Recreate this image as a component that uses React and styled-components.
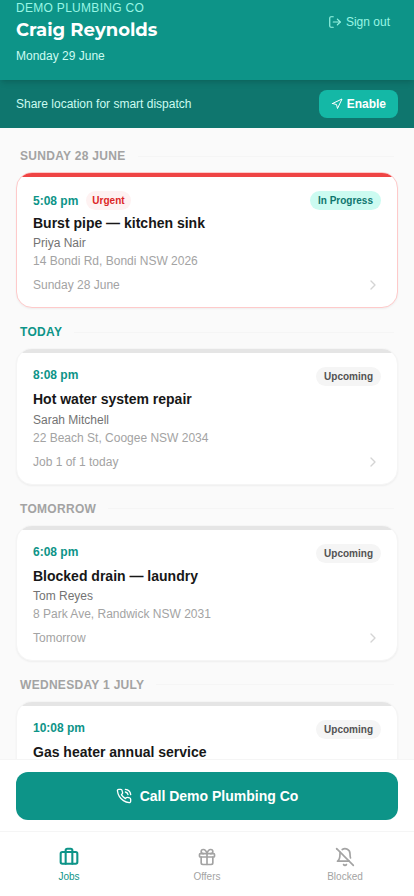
import React from "react";
import styled, { createGlobalStyle } from "styled-components";
import {
  LuLogOut, LuNavigation, LuPhoneCall, LuBriefcase, LuGift, LuBellOff, LuChevronRight,
} from "react-icons/lu";

const Global = createGlobalStyle`
  * { box-sizing: border-box; }
  body {
    margin: 0;
    background: #fafafa;
    color: #171717;
    font: 400 12px/16px "Liberation Sans", Arial, sans-serif;
  }
  button { font: inherit; border: 0; cursor: pointer; }
  h1, h2, h3, p { margin: 0; }
  svg { display: block; flex: none; }
`;

const Screen = styled.div`
  display: flex;
  flex-direction: column;
  height: 100vh;
  overflow: hidden;
`;

const Header = styled.header`
  display: flex;
  justify-content: space-between;
  align-items: flex-start;
  flex: none;
  height: 80px;
  padding: 0 16px;
  background: #0d9488;
  box-shadow: 0 4px 6px -1px rgba(0, 0, 0, 0.1), 0 2px 4px -2px rgba(0, 0, 0, 0.1);
  z-index: 1;
`;

const Company = styled.p`
  color: #99f6e4;
  letter-spacing: 0.3px;
  text-transform: uppercase;
`;

const TechName = styled.h1`
  color: #fff;
  font-family: "Montserrat", sans-serif;
  font-size: 18px;
  font-weight: 700;
  line-height: 28px;
`;

const Today = styled.p`
  margin-top: 4px;
  color: #ccfbf1;
`;

const SignOut = styled.button`
  display: flex;
  align-items: center;
  gap: 4px;
  margin-top: 8px;
  padding: 6px 8px;
  background: none;
  color: #99f6e4;
`;

const LocationBar = styled.div`
  display: flex;
  justify-content: space-between;
  align-items: center;
  flex: none;
  height: 48px;
  padding: 0 16px;
  background: #0f766e;
  color: #ccfbf1;
`;

const EnableButton = styled.button`
  display: flex;
  align-items: center;
  gap: 4px;
  height: 28px;
  padding: 0 12px;
  border-radius: 8px;
  background: #14b8a6;
  color: #fff;
  && { font-weight: 700; }
`;

const JobList = styled.main`
  display: flex;
  flex-direction: column;
  flex: 1;
  gap: 16px;
  min-height: 0;
  padding: 20px 16px 0;
  overflow: hidden;
`;

const DayHeading = styled.h2`
  display: flex;
  align-items: center;
  gap: 12px;
  margin-bottom: 8px;
  padding: 0 4px;
  color: ${(p) => (p.$current ? "#0d9488" : "#a3a3a3")};
  font-size: 12px;
  font-weight: 700;
  letter-spacing: 0.3px;
  text-transform: uppercase;

  &::after {
    content: "";
    flex: 1;
    height: 1px;
    background: #f5f5f5;
  }
`;

const Card = styled.article`
  border: 1px solid ${(p) => (p.$urgent ? "#fecaca" : "#f5f5f5")};
  border-radius: 16px;
  background: #fff;
  box-shadow: 0 1px 2px rgba(0, 0, 0, 0.05);
  overflow: hidden;
`;

const Strip = styled.div`
  height: 4px;
  background: ${(p) => (p.$urgent ? "#ef4444" : "#e5e5e5")};
`;

const CardBody = styled.div`
  padding: 14px 16px;
`;

const CardTop = styled.div`
  display: flex;
  justify-content: space-between;
  align-items: flex-start;
  margin-bottom: 4px;
`;

const TimeGroup = styled.div`
  display: flex;
  align-items: center;
  gap: 8px;
`;

const Time = styled.span`
  color: #0d9488;
  font-weight: 700;
`;

const tones = {
  urgent: { bg: "#fef2f2", fg: "#dc2626", pad: 6 },
  progress: { bg: "#ccfbf1", fg: "#0f766e", pad: 8 },
  upcoming: { bg: "#f5f5f5", fg: "#525252", pad: 8 },
};

const Badge = styled.span`
  padding: 2px ${(p) => tones[p.$tone].pad}px;
  border-radius: 10px;
  background: ${(p) => tones[p.$tone].bg};
  color: ${(p) => tones[p.$tone].fg};
  font-size: 10px;
  font-weight: 700;
  line-height: 15px;
`;

const JobTitle = styled.h3`
  font-size: 14px;
  font-weight: 700;
  line-height: 19.25px;
`;

const Customer = styled.p`
  margin-top: 2px;
  color: #737373;
`;

const Address = styled.p`
  margin-top: 2px;
  color: #a3a3a3;
`;

const CardFoot = styled.div`
  display: flex;
  justify-content: space-between;
  margin-top: 8px;
  color: #a3a3a3;

  svg { color: #d4d4d4; }
`;

const CallBar = styled.div`
  flex: none;
  height: 72px;
  padding: 12px 16px 0;
  border-top: 1px solid #f5f5f5;
  background: #fff;
`;

const CallButton = styled.button`
  display: flex;
  align-items: center;
  justify-content: center;
  gap: 8px;
  width: 100%;
  height: 48px;
  border-radius: 12px;
  background: #0d9488;
  color: #fff;
  && { font-size: 14px; font-weight: 700; }
`;

const Nav = styled.nav`
  display: grid;
  grid-template-columns: repeat(3, 1fr);
  flex: none;
  height: 65px;
  border-top: 1px solid #f5f5f5;
  background: #fff;
`;

const NavItem = styled.a`
  display: flex;
  flex-direction: column;
  align-items: center;
  justify-content: center;
  gap: 2px;
  padding-top: 2px;
  color: ${(p) => (p.$active ? "#0d9488" : "#a3a3a3")};
  font-size: 10px;
  line-height: 15px;

  svg { stroke-width: ${(p) => (p.$active ? 2.5 : 2)}; }
`;

const days = [
  { day: "Sunday 28 June", time: "5:08 pm", urgent: true, status: "In Progress", tone: "progress", title: "Burst pipe — kitchen sink", customer: "Priya Nair", address: "14 Bondi Rd, Bondi NSW 2026", note: "Sunday 28 June" },
  { day: "Today", current: true, time: "8:08 pm", status: "Upcoming", tone: "upcoming", title: "Hot water system repair", customer: "Sarah Mitchell", address: "22 Beach St, Coogee NSW 2034", note: "Job 1 of 1 today" },
  { day: "Tomorrow", time: "6:08 pm", status: "Upcoming", tone: "upcoming", title: "Blocked drain — laundry", customer: "Tom Reyes", address: "8 Park Ave, Randwick NSW 2031", note: "Tomorrow" },
  { day: "Wednesday 1 July", time: "10:08 pm", status: "Upcoming", tone: "upcoming", title: "Gas heater annual service" },
];

function JobCard({ job }) {
  return (
    <Card $urgent={job.urgent}>
      <Strip $urgent={job.urgent} />
      <CardBody>
        <CardTop>
          <TimeGroup>
            <Time>{job.time}</Time>
            {job.urgent && <Badge $tone="urgent">Urgent</Badge>}
          </TimeGroup>
          <Badge $tone={job.tone}>{job.status}</Badge>
        </CardTop>
        <JobTitle>{job.title}</JobTitle>
        {job.customer && <Customer>{job.customer}</Customer>}
        {job.address && <Address>{job.address}</Address>}
        {job.note && (
          <CardFoot>
            <span>{job.note}</span>
            <LuChevronRight size={16} />
          </CardFoot>
        )}
      </CardBody>
    </Card>
  );
}

export default function App() {
  return (
    <Screen>
      <Global />
      <Header>
        <div>
          <Company>Demo Plumbing Co</Company>
          <TechName>Craig Reynolds</TechName>
          <Today>Monday 29 June</Today>
        </div>
        <SignOut><LuLogOut size={14} />Sign out</SignOut>
      </Header>
      <LocationBar>
        <span>Share location for smart dispatch</span>
        <EnableButton><LuNavigation size={12} />Enable</EnableButton>
      </LocationBar>
      <JobList>
        {days.map((job) => (
          <section key={job.day}>
            <DayHeading $current={job.current}>{job.day}</DayHeading>
            <JobCard job={job} />
          </section>
        ))}
      </JobList>
      <CallBar>
        <CallButton><LuPhoneCall size={16} />Call Demo Plumbing Co</CallButton>
      </CallBar>
      <Nav>
        <NavItem $active><LuBriefcase size={20} />Jobs</NavItem>
        <NavItem><LuGift size={20} />Offers</NavItem>
        <NavItem><LuBellOff size={20} />Blocked</NavItem>
      </Nav>
    </Screen>
  );
}
